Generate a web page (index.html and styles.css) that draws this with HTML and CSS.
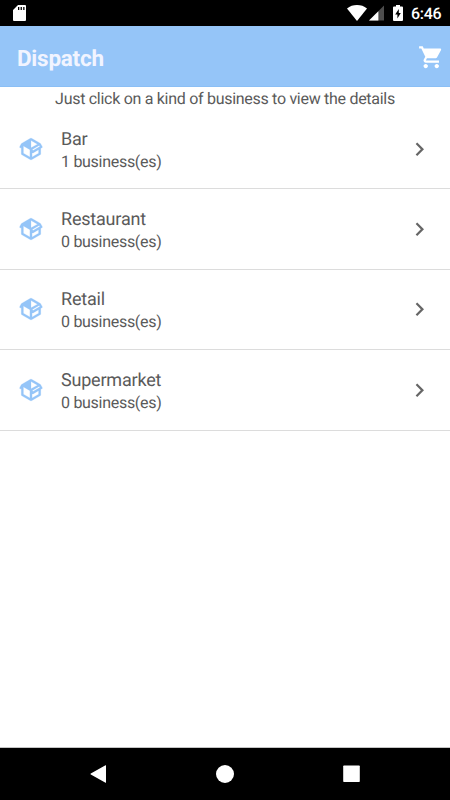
FILE: index.html
```html
<!DOCTYPE html>
<html lang="en">
<head>
<meta charset="utf-8">
<title>Dispatch</title>
<link rel="stylesheet" href="styles.css">
</head>
<body>
<svg width="0" height="0" class="defs">
  <symbol id="box" viewBox="0 0 24 24"><path d="M2,10.96C1.5,10.68 1.35,10.07 1.63,9.59L3.13,7C3.24,6.8 3.41,6.66 3.6,6.58L11.43,2.18C11.59,2.06 11.79,2 12,2C12.21,2 12.41,2.06 12.57,2.18L20.47,6.62C20.66,6.72 20.82,6.88 20.91,7.08L22.36,9.6C22.64,10.08 22.47,10.69 22,10.96L21,11.54V16.5C21,16.88 20.79,17.21 20.47,17.38L12.57,21.82C12.41,21.94 12.21,22 12,22C11.79,22 11.59,21.94 11.43,21.82L3.53,17.38C3.21,17.21 3,16.88 3,16.5V10.96C2.7,11.13 2.32,11.14 2,10.96M12,4.15V4.15L12,10.85V10.85L17.96,7.5L12,4.15M5,15.91L11,19.29V12.58L5,9.21V15.91M19,15.91V12.69L14,15.59C13.67,15.77 13.3,15.76 13,15.6V19.29L19,15.91M13.85,13.36L20.13,9.73L19.55,8.72L13.27,12.35L13.85,13.36Z"/></symbol>
  <symbol id="chevron" viewBox="0 0 24 24"><path d="M8.59 16.34 13.17 11.75 8.59 7.16 10 5.75l6 6-6 6z"/></symbol>
</svg>
<div class="screen">
  <div class="status">
    <svg class="sd" viewBox="0 0 13 16"><path fill="#fff" fill-rule="evenodd" d="M5 0H12Q13 0 13 1V15Q13 16 12 16H1Q0 16 0 15V5ZM5 2V5H6.3V2ZM7.6 2V5H8.9V2ZM10.2 2V5H11.5V2Z"/></svg>
    <div class="status-right">
      <svg class="wifi" viewBox="0 0 20 16"><path fill="#fff" d="M10 16 0 3.4Q4.3 0 10 0T20 3.4Z"/></svg>
      <svg class="signal" viewBox="0 0 16 16"><path fill="#4d4d4d" d="M16 0V16H0Z"/><path fill="#fff" d="M10 6V16H0Z"/></svg>
      <svg class="battery" viewBox="0 0 10 16"><path fill="#fff" fill-rule="evenodd" d="M3 0H7V1.6H9Q10 1.6 10 2.6V15Q10 16 9 16H1Q0 16 0 15V2.6Q0 1.6 1 1.6H3ZM5.8 4 2.2 9.5H4.4V13.6L7.8 8H5.8Z"/></svg>
      <span class="clock">6:46</span>
    </div>
  </div>
  <header class="header">
    <h1>Dispatch</h1>
    <svg class="cart" viewBox="0 0 24 24"><path fill="#fff" d="M7 18c-1.1 0-1.99.9-1.99 2S5.900 22 7 22s2-.9 2-2-.9-2-2-2zM1 2v2h2l3.600 7.590-1.350 2.450c-.16.28-.25.61-.25.96 0 1.100.9 2 2 2h12v-2H7.420c-.14 0-.25-.11-.25-.25l.03-.12.9-1.630h7.450c.75 0 1.410-.41 1.750-1.030l3.580-6.490c.08-.14.12-.31.12-.48 0-.55-.45-1-1-1H5.210l-.94-2H1zm16 16c-1.100 0-1.990.9-1.990 2s.89 2 1.990 2 2-.9 2-2-.9-2-2-2z"/></svg>
  </header>
  <main class="content">
    <p class="hint">Just click on a kind of business to view the details</p>
    <div class="list">
      <div class="row"><svg class="box"><use href="#box"/></svg><div class="label"><div class="name">Bar</div><div class="count">1 business(es)</div></div><svg class="chevron"><use href="#chevron"/></svg></div>
      <div class="row"><svg class="box"><use href="#box"/></svg><div class="label"><div class="name">Restaurant</div><div class="count">0 business(es)</div></div><svg class="chevron"><use href="#chevron"/></svg></div>
      <div class="row"><svg class="box"><use href="#box"/></svg><div class="label"><div class="name">Retail</div><div class="count">0 business(es)</div></div><svg class="chevron"><use href="#chevron"/></svg></div>
      <div class="row"><svg class="box"><use href="#box"/></svg><div class="label"><div class="name">Supermarket</div><div class="count">0 business(es)</div></div><svg class="chevron"><use href="#chevron"/></svg></div>
    </div>
  </main>
  <nav class="nav">
    <svg viewBox="0 0 18 18"><path fill="#fff" d="M15.500.3Q16 0 16 .6V17.400Q16 18 15.500 17.700L.8 9.500Q0 9 .8 8.500Z"/></svg>
    <svg viewBox="0 0 18 18"><circle cx="9" cy="9" r="9" fill="#fff"/></svg>
    <svg viewBox="0 0 18 18"><rect x=".2" y=".5" width="16.600" height="16.600" rx=".8" fill="#fff"/></svg>
  </nav>
</div>
</body>
</html>
```

FILE: styles.css
```css
* { box-sizing: border-box; }
body { margin: 0; font-family: Roboto, sans-serif; background: #fff; text-rendering: geometricPrecision; }
svg { display: block; flex: none; }
.defs { position: absolute; }
.screen { width: 450px; height: 800px; display: flex; flex-direction: column; overflow: hidden; }
.status { height: 26px; background: #000; display: flex; justify-content: space-between; padding: 5px 9px 0 13px; }
.sd { width: 13px; height: 16px; }
.status-right { display: flex; }
.wifi { width: 20px; height: 16px; margin-right: 2px; }
.signal { width: 15px; height: 16px; margin-right: 9px; }
.battery { width: 10px; height: 16px; margin-right: 8px; }
.clock { width: 30px; color: #fff; font-size: 16px; letter-spacing: -.3px; font-weight: 500; line-height: 18px; }
.header { height: 61px; background: #95c5f8; border-bottom: 1px solid #8bbff5; display: flex; align-items: center; justify-content: space-between; padding: 1px 6px 0 17px; }
.header h1 { margin: 4px 0 0; font-size: 22.500px; letter-spacing: -.25px; line-height: 28px; font-weight: 700; color: #f1f4ff; }
.cart { width: 26.500px; height: 26.500px; margin-top: 1px; }
.content { flex: 1; border-bottom: 1px solid #c4c4c4; }
.hint { margin: 0; padding-top: 2px; height: 22px; text-align: center; font-size: 16px; letter-spacing: -.29px; line-height: 20px; color: #5a5a5a; }
.row { height: 80.400px; display: flex; align-items: center; padding: 0 17px 0 17.500px; border-bottom: 1px solid #dcdcdc; }
.box { width: 26px; height: 26px; fill: #95c5f8; stroke: #95c5f8; stroke-width: .2px; }
.label { flex: 1; margin: 3px 0 0 17.500px; color: #5a5a5a; }
.name { font-size: 18px; letter-spacing: -.2px; line-height: 22px; padding-top: 1px; }
.count { font-size: 16px; letter-spacing: -.29px; line-height: 22px; }
.chevron { width: 27px; height: 27px; fill: #666; margin-top: 1px; }
.nav { height: 52px; background: #000; display: flex; justify-content: center; align-items: center; gap: 108.500px; }
.nav svg { width: 18px; height: 18px; }
```
